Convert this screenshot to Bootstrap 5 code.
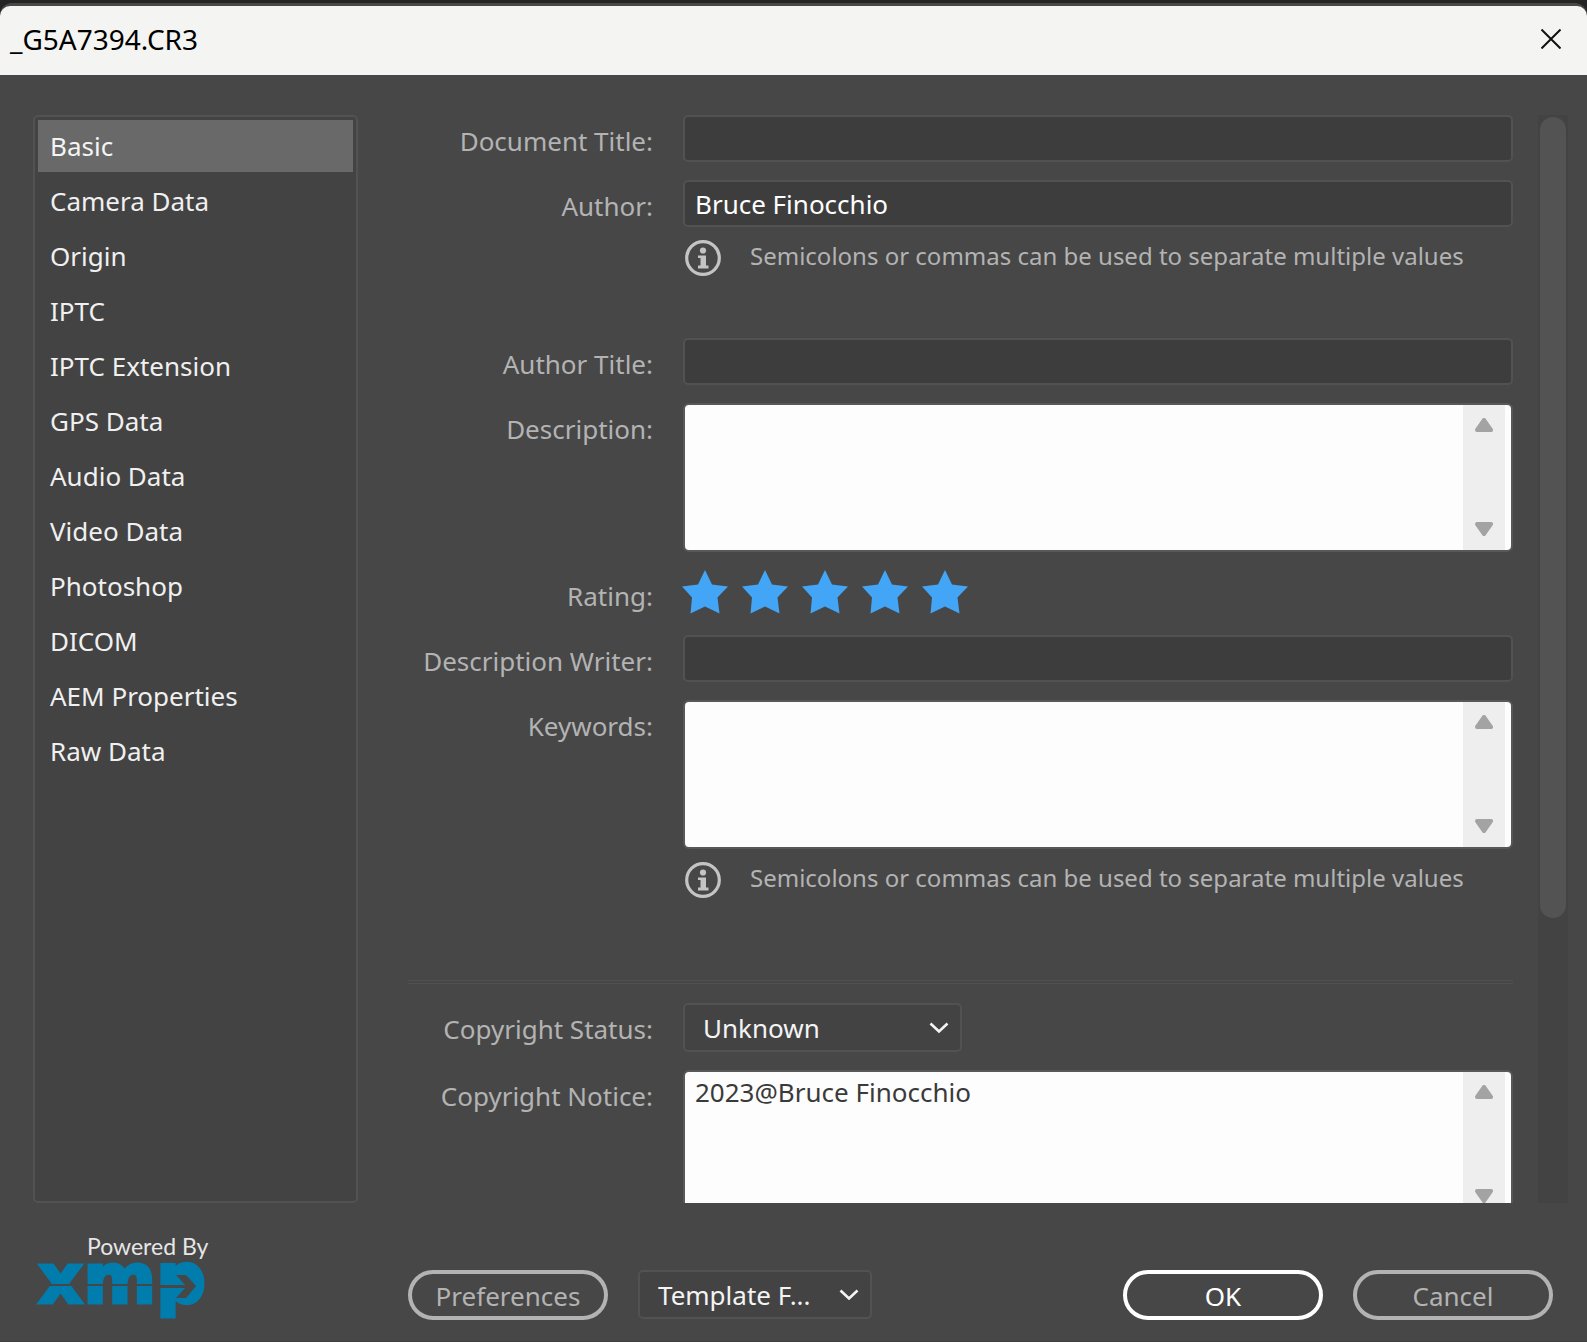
<!DOCTYPE html>
<html lang="en">
<head>
<meta charset="utf-8">
<meta name="viewport" content="width=device-width, initial-scale=1">
<title>_G5A7394.CR3</title>
<link href="https://cdn.jsdelivr.net/npm/bootstrap@5.3.0/dist/css/bootstrap.min.css" rel="stylesheet">
<style>
  body { background: #242424; color: #eee; font-family: "Noto Sans", "Open Sans", sans-serif; font-size: 26px; line-height: 36px; }
  .dialog { background: #474747; border-top: 3px solid #484846; border-bottom: 1px solid #3c3c3c; border-radius: 12px 12px 0 0; margin-top: 3px; height: calc(100vh - 3px); }
  .titlebar { background: #f4f5f2; color: #000; height: 69px; padding: 0 26px 3px 10px; border-radius: 10px 10px 0 0; }
  .titlebar h1 { font-size: 28px; line-height: 36px; }
  .close-btn { color: #111; line-height: 0; }
  .main-area { padding: 40px 19px 0 33px; min-height: 0; }
  .side { width: 325px; border: 2px solid #525252; border-radius: 5px; background: #434343; padding: 3px; gap: 3px; }
  .side .nav-link { color: #f0f0f0; height: 52px; padding: 8px 12px; border-radius: 0; }
  .side .nav-link.active { background: #696969; color: #f4f4f4; }
  .form-pane { margin-left: 50px; min-width: 0; }
  .form-stack { gap: 18px; }
  .line-item { gap: 30px; }
  .line-item > .caption { width: 245px; padding-top: 8px; color: #b3b3b3; text-align: right; }
  .dark-input { height: 47px; background: #3d3d3d; border: 2px solid #525252; border-radius: 5px; color: #fff; font-size: 26px; padding: 0 10px; }
  .dark-input:focus, .area-input:focus, .dark-select:focus { box-shadow: none; outline: 0; }
  .dark-input:focus { background: #3d3d3d; color: #fff; }
  .hint { color: #b3b3b3; font-size: 24px; line-height: 32px; padding: 13px 0 44px 2px; gap: 29px; }
  .area-box { height: 149px; background: #fdfdfd; border: 2px solid #585858; border-radius: 6px; padding-right: 6px; overflow: hidden; }
  .area-input { border: 0; background: transparent; color: #3a3a3a; resize: none; overflow: hidden; padding: 2px 10px; min-width: 0; }
  .gutter { width: 42px; background: #eee; padding: 13px 0 14px; }
  .star-line { height: 47px; gap: 14px; }
  .star-btn { width: 46px; line-height: 0; margin-left: -1px; margin-right: 1px; }
  .divider { height: 4px; border-top: 1px solid #505050; border-bottom: 1px solid #505050; margin-top: 20px; margin-bottom: 1px; }
  .dark-select { height: 49px; background-color: #434343; border: 2px solid #525252; border-radius: 5px; color: #f4f4f4; font-size: 26px; line-height: 36px; padding: 0 42px 0 18px;
    background-image: url("data:image/svg+xml,%3Csvg xmlns='http://www.w3.org/2000/svg' viewBox='0 0 20 12'%3E%3Cpath d='M1.500 1.500 10 9.500 18.500 1.500' fill='none' stroke='%23f4f4f4' stroke-width='2.600'/%3E%3C/svg%3E"); background-size: 20px 12px; background-position: right 11px center; }
  .status-select { width: 279px; }
  .template-select { width: 234px; margin-left: 30px; }
  .track { width: 30px; background: #434343; margin-left: 25px; padding: 2px; }
  .thumb { height: 801px; border-radius: 13px; background: #535353; }
  .footer-bar { height: 138px; padding: 0 34px 21px 33px; }
  .brand-mark { width: 325px; padding-left: 5px; }
  .powered { font-family: Lato, sans-serif; font-size: 23px; line-height: 32px; color: #e6e6e6; margin-left: 49px; }
  .brand-mark svg { font-family: "DejaVu Sans", sans-serif; font-weight: 700; font-size: 70px; }
  .pill { width: 200px; height: 50px; border: 4px solid #b3b3b3; border-radius: 25px; color: #b3b3b3; font-size: 26px; line-height: 36px; padding: 4px 0 2px; }
  .pill:hover { border-color: #fff; color: #fff; }
  .pill-main { border-color: #fff; color: #fff; }
  .left-actions { margin-left: 50px; }
  .right-actions { gap: 30px; }
</style>
<script src="https://cdn.jsdelivr.net/npm/bootstrap@5.3.0/dist/js/bootstrap.bundle.min.js"></script>
</head>
<body class="overflow-hidden">
<svg class="d-none" aria-hidden="true">
  <symbol id="star" viewBox="0 0 46 44"><path d="M23 0 30 14.500 46 16.500 35.500 27.500 37.500 43.500 23 36.500 8.500 43.500 10 27.500 0 16.500 16 14.500Z" fill="#42a5f5"/></symbol>
  <symbol id="info" viewBox="0 0 36 36"><circle cx="18" cy="18" r="16.300" fill="none" stroke="#c4c4c4" stroke-width="3.200"/><circle cx="18" cy="10.500" r="3.100" fill="#c4c4c4"/><path d="M13 15.500H21V25.500H23.500V28.500H13V25.500H15.500V18H13Z" fill="#c4c4c4"/></symbol>
  <symbol id="tri-up" viewBox="0 0 18 14"><path d="M9 2 16 12H2Z" fill="#a3a3a3" stroke="#a3a3a3" stroke-width="4" stroke-linejoin="round"/></symbol>
  <symbol id="tri-down" viewBox="0 0 18 14"><path d="M9 12 16 2H2Z" fill="#a3a3a3" stroke="#a3a3a3" stroke-width="4" stroke-linejoin="round"/></symbol>
</svg>

<div class="dialog d-flex flex-column">
  <header class="titlebar d-flex align-items-center justify-content-between flex-shrink-0">
    <h1 class="fw-normal m-0">_G5A7394.CR3</h1>
    <button type="button" class="close-btn btn p-0 border-0" aria-label="Close"><svg width="20" height="20" viewBox="0 0 20 20"><path d="M.5.5 19.500 19.500M19.500.5.5 19.500" stroke="currentColor" stroke-width="2"/></svg></button>
  </header>

  <main class="main-area d-flex flex-grow-1">
    <nav class="side nav flex-column flex-nowrap flex-shrink-0">
      <a class="nav-link active" href="#">Basic</a>
      <a class="nav-link" href="#">Camera Data</a>
      <a class="nav-link" href="#">Origin</a>
      <a class="nav-link" href="#">IPTC</a>
      <a class="nav-link" href="#">IPTC Extension</a>
      <a class="nav-link" href="#">GPS Data</a>
      <a class="nav-link" href="#">Audio Data</a>
      <a class="nav-link" href="#">Video Data</a>
      <a class="nav-link" href="#">Photoshop</a>
      <a class="nav-link" href="#">DICOM</a>
      <a class="nav-link" href="#">AEM Properties</a>
      <a class="nav-link" href="#">Raw Data</a>
    </nav>

    <form class="form-pane flex-grow-1 overflow-hidden">
      <div class="form-stack d-flex flex-column">
        <div class="line-item d-flex">
          <label class="caption flex-shrink-0" for="docTitle">Document Title:</label>
          <input id="docTitle" type="text" class="form-control dark-input">
        </div>
        <div class="line-item d-flex">
          <label class="caption flex-shrink-0" for="author">Author:</label>
          <div class="flex-grow-1">
            <input id="author" type="text" class="form-control dark-input" value="Bruce Finocchio">
            <div class="hint d-flex"><svg width="36" height="36" class="flex-shrink-0"><use href="#info"/></svg><span class="text-nowrap">Semicolons or commas can be used to separate multiple values</span></div>
          </div>
        </div>
        <div class="line-item d-flex">
          <label class="caption flex-shrink-0" for="authorTitle">Author Title:</label>
          <input id="authorTitle" type="text" class="form-control dark-input">
        </div>
        <div class="line-item d-flex">
          <label class="caption flex-shrink-0" for="description">Description:</label>
          <div class="area-box d-flex flex-grow-1">
            <textarea id="description" class="area-input flex-grow-1"></textarea>
            <div class="gutter d-flex flex-column justify-content-between align-items-center flex-shrink-0"><svg width="18" height="14"><use href="#tri-up"/></svg><svg width="18" height="14"><use href="#tri-down"/></svg></div>
          </div>
        </div>
        <div class="line-item d-flex">
          <span class="caption flex-shrink-0" id="ratingLabel">Rating:</span>
          <div class="star-line d-flex align-items-start" role="group" aria-labelledby="ratingLabel">
            <button type="button" class="star-btn btn p-0 border-0" aria-label="1 star"><svg width="46" height="44"><use href="#star"/></svg></button>
            <button type="button" class="star-btn btn p-0 border-0" aria-label="2 stars"><svg width="46" height="44"><use href="#star"/></svg></button>
            <button type="button" class="star-btn btn p-0 border-0" aria-label="3 stars"><svg width="46" height="44"><use href="#star"/></svg></button>
            <button type="button" class="star-btn btn p-0 border-0" aria-label="4 stars"><svg width="46" height="44"><use href="#star"/></svg></button>
            <button type="button" class="star-btn btn p-0 border-0" aria-label="5 stars"><svg width="46" height="44"><use href="#star"/></svg></button>
          </div>
        </div>
        <div class="line-item d-flex">
          <label class="caption flex-shrink-0" for="writer">Description Writer:</label>
          <input id="writer" type="text" class="form-control dark-input">
        </div>
        <div class="line-item d-flex">
          <label class="caption flex-shrink-0" for="keywords">Keywords:</label>
          <div class="flex-grow-1">
            <div class="area-box d-flex">
              <textarea id="keywords" class="area-input flex-grow-1"></textarea>
              <div class="gutter d-flex flex-column justify-content-between align-items-center flex-shrink-0"><svg width="18" height="14"><use href="#tri-up"/></svg><svg width="18" height="14"><use href="#tri-down"/></svg></div>
            </div>
            <div class="hint d-flex"><svg width="36" height="36" class="flex-shrink-0"><use href="#info"/></svg><span class="text-nowrap">Semicolons or commas can be used to separate multiple values</span></div>
          </div>
        </div>
        <div class="divider"></div>
        <div class="line-item d-flex">
          <label class="caption flex-shrink-0" for="status">Copyright Status:</label>
          <select id="status" class="form-select dark-select status-select"><option>Unknown</option><option>Copyrighted</option><option>Public Domain</option></select>
        </div>
        <div class="line-item d-flex">
          <label class="caption flex-shrink-0" for="notice">Copyright Notice:</label>
          <div class="area-box d-flex flex-grow-1">
            <textarea id="notice" class="area-input flex-grow-1">2023@Bruce Finocchio</textarea>
            <div class="gutter d-flex flex-column justify-content-between align-items-center flex-shrink-0"><svg width="18" height="14"><use href="#tri-up"/></svg><svg width="18" height="14"><use href="#tri-down"/></svg></div>
          </div>
        </div>
      </div>
    </form>

    <div class="track flex-shrink-0" aria-hidden="true"><div class="thumb"></div></div>
  </main>

  <footer class="footer-bar d-flex align-items-end flex-shrink-0">
    <div class="brand-mark flex-shrink-0">
      <div class="powered">Powered By</div>
      <svg class="d-block overflow-visible" width="170" height="58" viewBox="0 0 170 58" role="img" aria-label="xmp">
        <text x="0" y="41" fill="#007cad" stroke="#007cad" stroke-width="3">xmp</text>
        <path d="M136 10H152V38H136Z" fill="#007cad"/>
        <path d="M-2 23H122" stroke="#474747" stroke-width="2"/>
        <path d="M138 13H148L158 24 148 36H138L147 26H122V23H147Z" fill="#474747"/>
      </svg>
    </div>
    <div class="left-actions d-flex flex-grow-1">
      <button type="button" class="btn pill">Preferences</button>
      <select class="form-select dark-select template-select" aria-label="Template"><option>Template F...</option></select>
    </div>
    <div class="right-actions d-flex">
      <button type="button" class="btn pill pill-main">OK</button>
      <button type="button" class="btn pill">Cancel</button>
    </div>
  </footer>
</div>
</body>
</html>
